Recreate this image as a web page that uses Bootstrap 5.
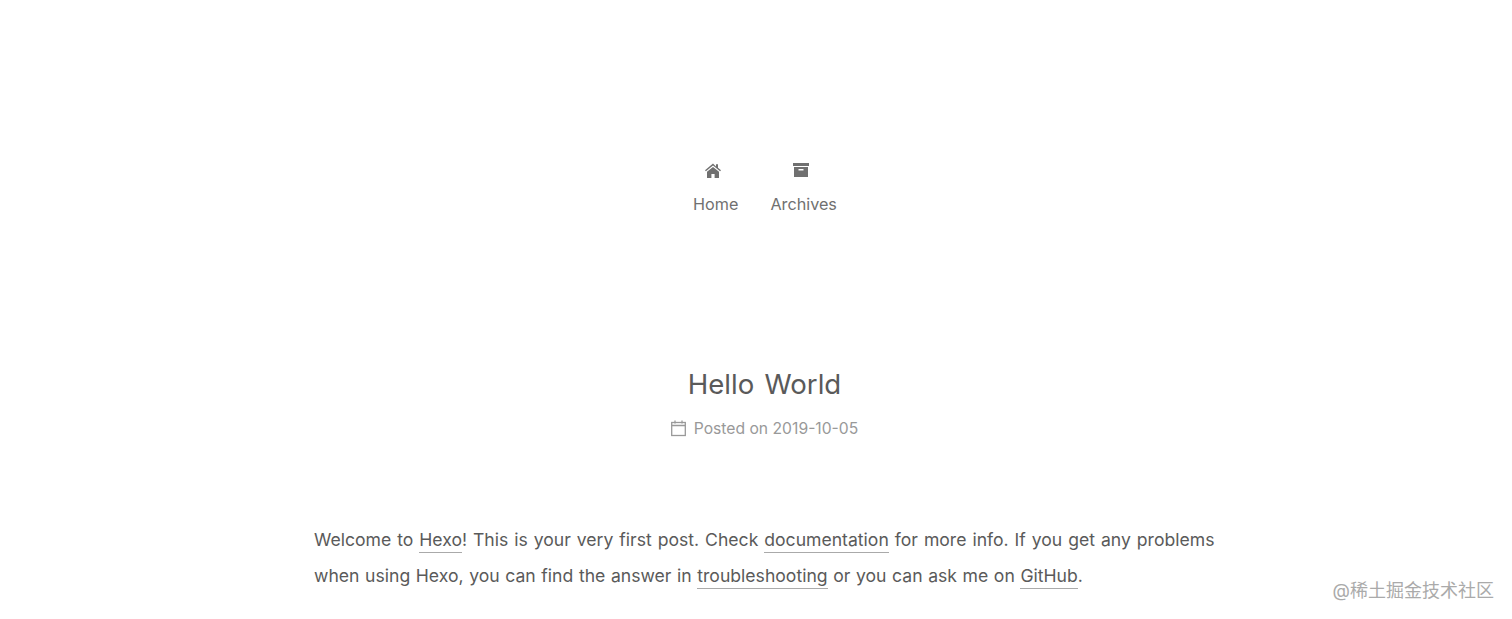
<!DOCTYPE html>
<html lang="en">
<head>
  <meta charset="UTF-8">
  <title>Hello World</title>
  <link href="https://cdn.jsdelivr.net/npm/bootstrap@5.3.0/dist/css/bootstrap.min.css" rel="stylesheet">
  <style>
    body { background: #fff; font-family: Inter, "Noto Sans CJK SC", sans-serif; color: #555; height: 619px; overflow: hidden; position: relative; }
    .page-wrap { width: 900px; margin-left: 314px; }
    .site-menu { padding-top: 161px; height: 368px; gap: 32px; margin-left: 2px; }
    .menu-link { color: #707070; font-size: 16.2px; line-height: 20px; text-decoration: none; }
    .menu-link svg { display: block; margin-bottom: 13px; }
    .icon-home { margin-left: 8px; }
    .icon-box { margin-left: 23px; }
    .post-header { margin-left: 1px; }
    .post-title { font-size: 27.6px; font-weight: 400; line-height: 32px; margin: 0; color: #5a5a5a; word-spacing: 2.5px; }
    .post-meta { font-size: 15.7px; line-height: 20px; color: #999; margin-top: 19px; gap: 8px; }
    .post-text { font-size: 17.6px; line-height: 36px; margin: 83px 0 0; word-spacing: 1px; white-space: nowrap; color: #5a5a5a; }
    .post-text a { color: #5a5a5a; text-decoration: none; border-bottom: 1px solid #aaa; padding-bottom: 2px; }
    .second-line { word-spacing: 0.65px; }
    .site-mark { position: absolute; right: 18px; top: 580px; font-size: 18px; line-height: 22px; color: #aaa; }
  </style>
</head>
<body>
  <div class="page-wrap">
    <nav class="site-menu d-flex justify-content-center">
      <a class="menu-link" href="#">
        <svg class="icon-home" width="24" height="20" viewBox="0 0 24 20" fill="#707070"><path d="M12 2.5 4 9.2l.9 1L12 4.5l7.1 5.7.9-1-3-2.5V3.2h-2v2.3zM6 10.8V17h4.4v-4h3.2v4H18v-6.2L12 6z"/></svg>
        Home
      </a>
      <a class="menu-link" href="#">
        <svg class="icon-box" width="16" height="20" viewBox="0 0 16 20" fill="#707070"><path d="M0 2h16v3H0zM1 6h14v10H1zM5.5 8v1.6h5V8z" fill-rule="evenodd"/></svg>
        Archives
      </a>
    </nav>
    <header class="post-header text-center">
      <h1 class="post-title">Hello World</h1>
      <div class="post-meta d-flex justify-content-center align-items-center">
        <svg width="15" height="18" viewBox="0 0 15 18" fill="none" stroke="#999" stroke-width="1.3"><rect x=".7" y="2.5" width="13.6" height="13"/><path d="M.7 5.5h13.6M4 .5v3M11 .5v3"/></svg>
        <span>Posted on 2019-10-05</span>
      </div>
    </header>
    <p class="post-text">Welcome to <a href="#">Hexo</a>! This is your very first post. Check <a href="#">documentation</a> for more info. If you get any problems<br><span class="second-line">when using Hexo, you can find the answer in <a href="#">troubleshooting</a> or you can ask me on <a href="#">GitHub</a>.</span></p>
  </div>
  <div class="site-mark">@稀土掘金技术社区</div>
  <script src="https://cdn.jsdelivr.net/npm/bootstrap@5.3.0/dist/js/bootstrap.bundle.min.js"></script>
</body>
</html>
